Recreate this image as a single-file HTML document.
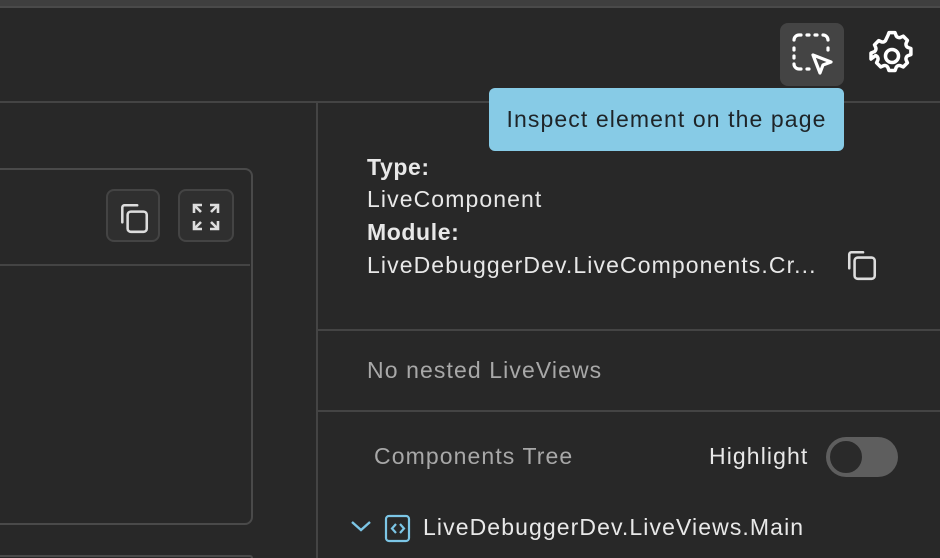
<!DOCTYPE html>
<html><head><style>
html,body{margin:0;width:940px;height:558px;overflow:hidden;background:#282828}
#w{position:relative;width:940px;height:558px;overflow:hidden;font-family:"Liberation Sans",sans-serif;color:#e8e8e8}
.a{position:absolute}
.t{font-size:23px;white-space:nowrap;letter-spacing:1.1px}
</style></head><body><div id="w">
<div class="a" style="left:0;top:0;width:940px;height:6px;background:#3f3f3f"></div>
<div class="a" style="left:0;top:6px;width:940px;height:2px;background:#4a4a4a"></div>
<div class="a" style="left:0;top:101px;width:940px;height:2px;background:#444"></div>
<div class="a" style="left:316px;top:102px;width:2px;height:456px;background:#444"></div>
<div class="a" style="left:318px;top:329px;width:622px;height:2px;background:#444"></div>
<div class="a" style="left:318px;top:410px;width:622px;height:2px;background:#444"></div>
<div class="a" style="left:-10px;top:168px;width:259px;height:353px;border:2px solid #4a4a4a;border-radius:8px"></div>
<div class="a" style="left:0;top:264px;width:250px;height:2px;background:#444"></div>
<div class="a" style="left:-10px;top:555px;width:259px;height:1px;border:2px solid #4a4a4a;border-bottom:none;border-radius:8px 8px 0 0"></div>
<div class="a" style="left:106px;top:189px;width:54px;height:53px;border:2px solid #444;border-radius:8px;background:#2f2f2f;box-sizing:border-box"></div>
<svg class="a" style="left:117px;top:201px" width="34" height="34" viewBox="0 0 32 32" fill="none" stroke="#ddd" stroke-width="2.4" stroke-linecap="round"><path d="M5 20V6a2 2 0 0 1 2-2h12"/><rect x="10" y="10" width="18" height="19" rx="3"/></svg>
<div class="a" style="left:178px;top:189px;width:56px;height:53px;border:2px solid #444;border-radius:8px;background:#2f2f2f;box-sizing:border-box"></div>
<svg class="a" style="left:190px;top:201px" width="32" height="32" viewBox="0 0 32 32" fill="none" stroke="#ddd" stroke-width="2.6"><path d="M4 12V4h8M4 4l7 7M28 12V4h-8M28 4l-7 7M4 20v8h8M4 28l7-7M28 20v8h-8M28 28l-7-7"/></svg>
<div class="a" style="left:780px;top:23px;width:64px;height:63px;background:#444;border-radius:8px"></div>
<svg class="a" style="left:788px;top:30px" width="50" height="50" viewBox="0 0 50 50" fill="none" stroke="#fff" stroke-width="3.2" stroke-linecap="round"><path d="M6 10v0M6 18v2M6 26v2M6 34v0M11 39h2M19 39h2M11 5h2M19 5h2M27 5h2M35 5h0M40 10v0M40 18v2M6 10a5 5 0 0 1 5-5M35 5a5 5 0 0 1 5 5M6 34a5 5 0 0 0 5 5"/><path d="M25 25l18 7-8 3-3 8z" stroke-linejoin="round"/></svg>
<svg class="a" style="left:864px;top:28px" width="56" height="56" viewBox="0 0 24 24" fill="none" stroke="#fff" stroke-width="1.5" stroke-linejoin="round"><path d="M10.3 3.1l.4-1.1h2.6l.4 1.1a1.5 1.5 0 0 0 2 .9l1.1-.5 1.8 1.8-.5 1.1a1.5 1.5 0 0 0 .9 2l1.1.4v2.6l-1.1.4a1.5 1.5 0 0 0-.9 2l.5 1.1-1.8 1.8-1.1-.5a1.5 1.5 0 0 0-2 .9l-.4 1.1h-2.6l-.4-1.1a1.5 1.5 0 0 0-2-.9l-1.1.5-1.8-1.8.5-1.1a1.5 1.5 0 0 0-.9-2L3 13.3v-2.6l1.1-.4a1.5 1.5 0 0 0 .9-2l-.5-1.1 1.8-1.8 1.1.5a1.5 1.5 0 0 0 2-.9z"/><circle cx="12" cy="12" r="2.8"/></svg>
<div class="a t" style="left:489px;top:88px;width:355px;height:63px;background:#87cbe6;border-radius:6px;color:#1e2428;line-height:63px;text-align:center">Inspect element on the page</div>
<div class="a t" style="left:367px;top:154px;font-weight:bold;letter-spacing:0.6px">Type:</div>
<div class="a t" style="left:367px;top:186px">LiveComponent</div>
<div class="a t" style="left:367px;top:219px;font-weight:bold;letter-spacing:0.6px">Module:</div>
<div class="a t" style="left:367px;top:252px">LiveDebuggerDev.LiveComponents.Cr...</div>
<svg class="a" style="left:845px;top:248px" width="34" height="34" viewBox="0 0 32 32" fill="none" stroke="#ddd" stroke-width="2.4" stroke-linecap="round"><path d="M4 19V6a2 2 0 0 1 2-2h11"/><rect x="9" y="9" width="19" height="20" rx="3"/></svg>
<div class="a t" style="left:367px;top:357px;color:#a8a8a8">No nested LiveViews</div>
<div class="a t" style="left:374px;top:443px;color:#a8a8a8">Components Tree</div>
<div class="a t" style="left:709px;top:443px">Highlight</div>
<div class="a" style="left:826px;top:437px;width:72px;height:40px;border-radius:20px;background:#5e5e5e"></div>
<div class="a" style="left:829px;top:440px;width:32px;height:32px;border-radius:50%;background:#2a2a2a;border:1px solid #5e5e5e"></div>
<svg class="a" style="left:349px;top:518px" width="24" height="16" viewBox="0 0 24 16" fill="none" stroke="#7cc6e6" stroke-width="2.4"><path d="M3 4l9 8 9-8"/></svg>
<svg class="a" style="left:384px;top:514px" width="28" height="30" viewBox="0 0 28 30" fill="none" stroke="#7cc6e6" stroke-width="2.2"><rect x="2" y="2" width="23" height="25" rx="3"/><path d="M12 10l-4 4.5 4 4.5M16 10l4 4.5-4 4.5"/></svg>
<div class="a t" style="left:423px;top:514px">LiveDebuggerDev.LiveViews.Main</div>
</div></body></html>
